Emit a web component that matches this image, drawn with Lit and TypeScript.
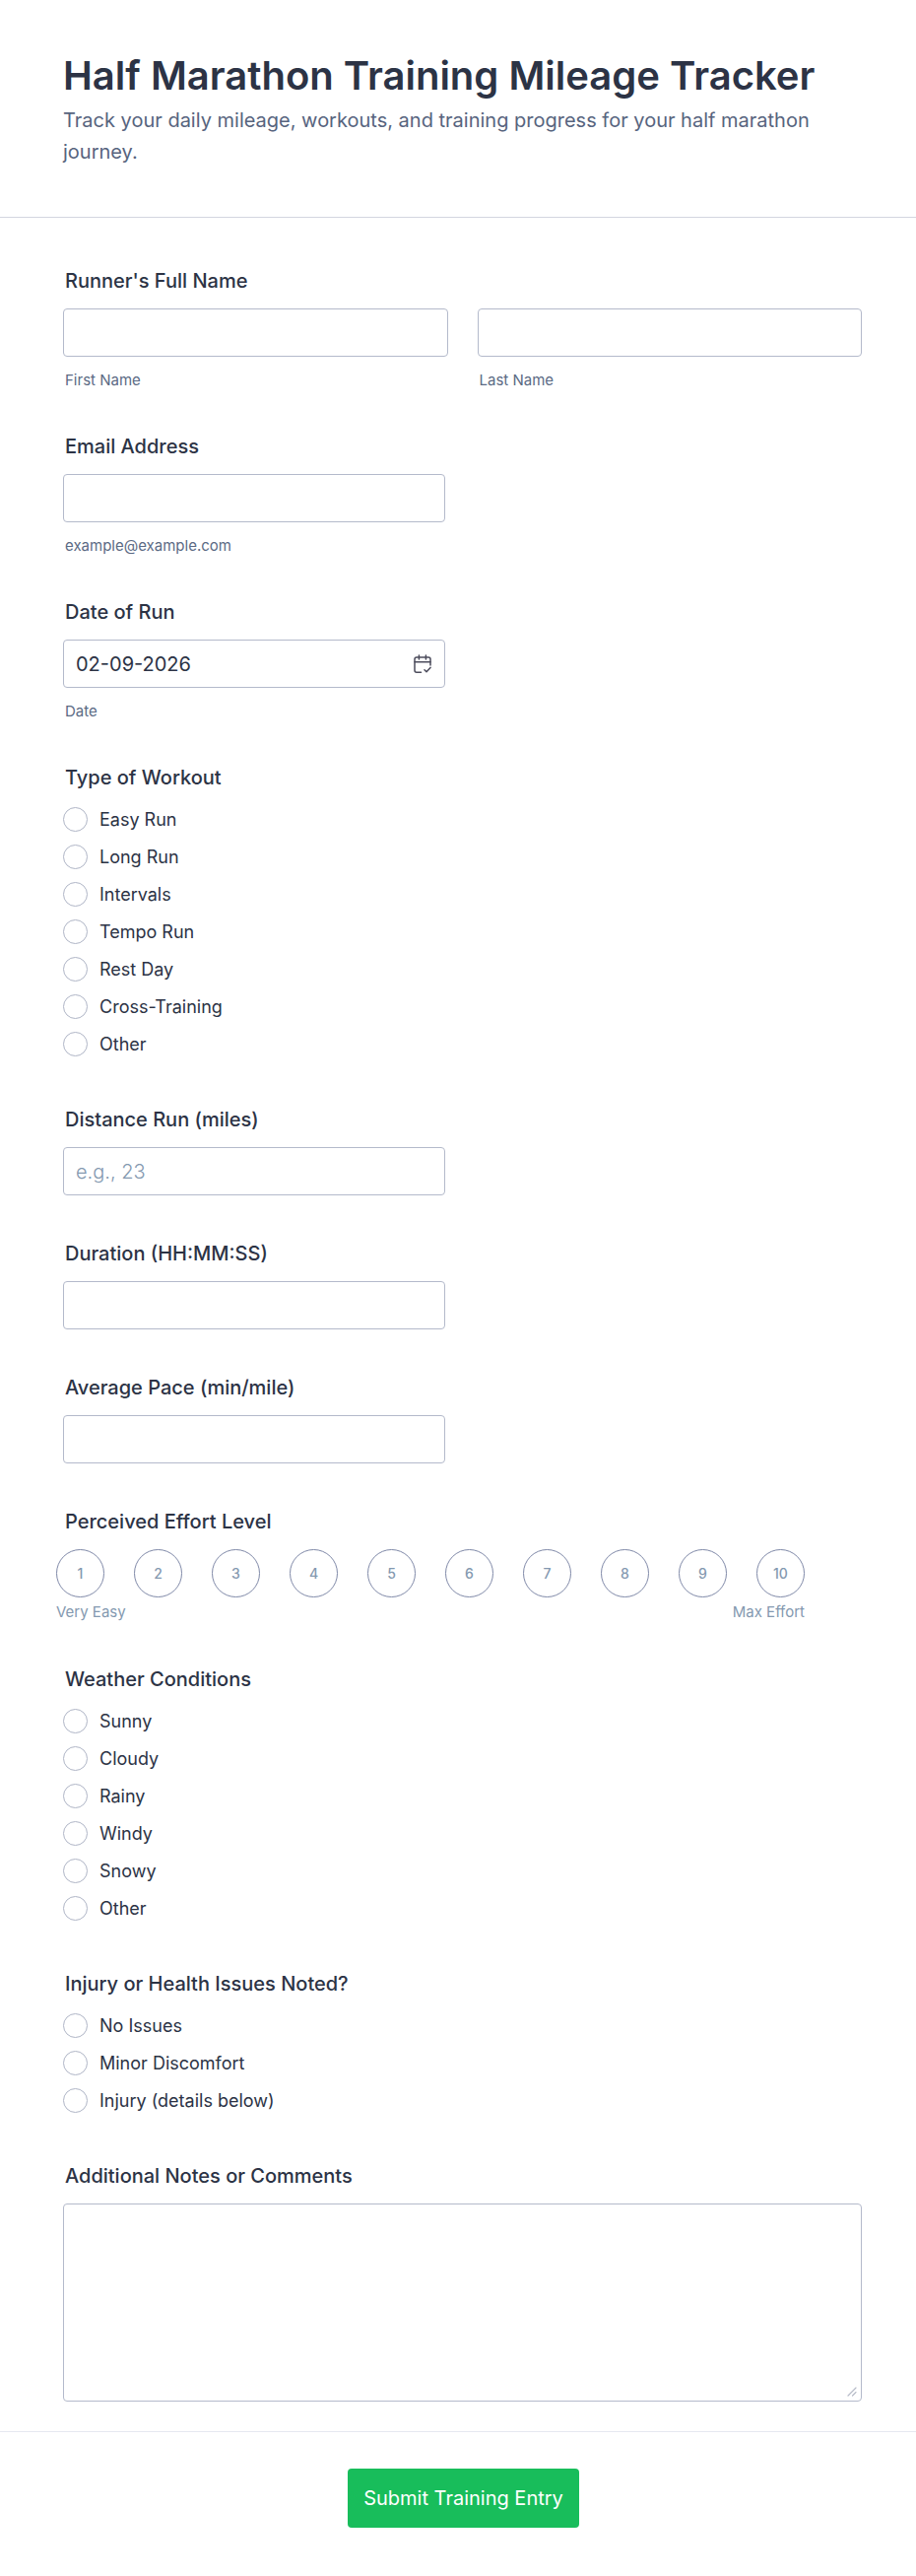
import { LitElement, html, css, nothing } from "lit";
import { customElement, property } from "lit/decorators.js";

const WORKOUTS = ["Easy Run", "Long Run", "Intervals", "Tempo Run", "Rest Day", "Cross-Training", "Other"];
const WEATHER = ["Sunny", "Cloudy", "Rainy", "Windy", "Snowy", "Other"];
const INJURIES = ["No Issues", "Minor Discomfort", "Injury (details below)"];
const EFFORT = [1, 2, 3, 4, 5, 6, 7, 8, 9, 10];

const shared = css`
  *,
  *::before,
  *::after {
    box-sizing: border-box;
  }
  .group {
    margin: 0;
    padding: 0;
    border: 0;
    min-width: 0;
  }
  .title {
    display: block;
    padding: 0 0 0 2px;
    margin-bottom: 14px;
    font-size: 20px;
    font-weight: 500;
    line-height: 28px;
    color: #2c3345;
  }
`;

@customElement("choice-list")
export class ChoiceList extends LitElement {
  @property() heading = "";
  @property() name = "";
  @property({ attribute: false }) options: string[] = [];

  static styles = [
    shared,
    css`
      :host {
        display: block;
      }
      .list {
        display: grid;
        gap: 13px;
        padding: 2px 0 5px;
      }
      .option {
        display: flex;
        align-items: center;
        gap: 12px;
        justify-self: start;
        font-size: 18px;
        line-height: 25px;
        color: #2c3345;
      }
      .radio {
        appearance: none;
        flex: none;
        width: 25px;
        height: 25px;
        margin: 0;
        border: 1px solid #afb5c6;
        border-radius: 50%;
        background: #fff;
      }
      .radio:checked {
        border: 7px solid #2e69ff;
      }
    `,
  ];

  render() {
    return html`
      <fieldset class="group">
        <legend class="title">${this.heading}</legend>
        <div class="list">
          ${this.options.map(
            (text) => html`
              <label class="option">
                <input class="radio" type="radio" name=${this.name} value=${text} />
                <span>${text}</span>
              </label>
            `
          )}
        </div>
      </fieldset>
    `;
  }
}

@customElement("effort-scale")
export class EffortScale extends LitElement {
  static styles = [
    shared,
    css`
      :host {
        display: block;
      }
      .scale {
        width: fit-content;
        max-width: 100%;
        margin-left: -7px;
      }
      .steps {
        display: flex;
        flex-wrap: wrap;
        gap: 30px;
      }
      .step {
        display: grid;
        place-items: center;
        font-size: 14px;
        font-weight: 500;
        color: #8499b0;
      }
      .dot,
      .num {
        grid-area: 1 / 1;
      }
      .dot {
        appearance: none;
        width: 49px;
        height: 49px;
        margin: 0;
        border: 1px solid #7f89a8;
        border-radius: 50%;
      }
      .dot:checked {
        background: #2c3345;
      }
      .num {
        pointer-events: none;
      }
      .ends {
        display: flex;
        justify-content: space-between;
        margin-top: 6px;
        font-size: 15px;
        line-height: 18px;
        color: #8499b0;
      }
    `,
  ];

  render() {
    return html`
      <fieldset class="group">
        <legend class="title">Perceived Effort Level</legend>
        <div class="scale">
          <div class="steps">
            ${EFFORT.map(
              (n) => html`
                <label class="step">
                  <input class="dot" type="radio" name="effort" value=${n} />
                  <span class="num">${n}</span>
                </label>
              `
            )}
          </div>
          <div class="ends"><span>Very Easy</span><span>Max Effort</span></div>
        </div>
      </fieldset>
    `;
  }
}

@customElement("app-root")
export class AppRoot extends LitElement {
  static styles = [
    shared,
    css`
      :host {
        display: block;
        font-family: Inter, "Liberation Sans", sans-serif;
        color: #2c3345;
        background: #fff;
      }
      .header {
        padding: 53px 64px 50px;
        border-bottom: 1px solid #d3d6e0;
      }
      .heading {
        margin: 0 0 5px;
        font-size: 40px;
        font-weight: 600;
        line-height: 48px;
      }
      .intro {
        margin: 0;
        font-size: 20px;
        font-weight: 400;
        line-height: 32px;
        color: #57647e;
      }
      .fields {
        display: flex;
        flex-direction: column;
        gap: 45px;
        padding: 50px 55px 30px 64px;
      }
      .names {
        display: grid;
        grid-template-columns: 1fr 1fr;
        gap: 30px;
      }
      .narrow {
        max-width: 388px;
      }
      .control {
        display: block;
        width: 100%;
        height: 49px;
        margin: 0;
        padding: 0 12px;
        border: 1px solid #b4bacb;
        border-radius: 4px;
        background: #fff;
        font-family: inherit;
        font-size: 20px;
        color: #2c3345;
      }
      .control::placeholder {
        color: #8499b0;
        font-weight: 300;
        opacity: 1;
      }
      .hint {
        display: block;
        margin: 14px 0 -2px;
        padding-left: 2px;
        font-size: 15px;
        line-height: 20px;
        color: #5b6a84;
      }
      .box {
        position: relative;
      }
      .picker {
        position: absolute;
        top: 0;
        right: 0;
        display: grid;
        place-items: center;
        width: 46px;
        height: 49px;
        padding: 0;
        border: 0;
        background: none;
      }
      .area {
        height: 201px;
        padding: 12px;
        resize: none;
      }
      .grip {
        position: absolute;
        right: 5px;
        bottom: 5px;
        pointer-events: none;
      }
      .footer {
        display: flex;
        justify-content: center;
        padding: 37px 53px 49px 64px;
        border-top: 1px solid #e6e8f0;
      }
      .submit {
        height: 60px;
        padding: 0 16px;
        border: 0;
        border-radius: 4px;
        background: #18bd5b;
        color: #fff;
        font-family: inherit;
        font-size: 20px;
        font-weight: 400;
      }
    `,
  ];

  private field(id: string, title: string, opts: { type?: string; hint?: string; placeholder?: string } = {}) {
    return html`
      <div class="narrow">
        <label class="title" for=${id}>${title}</label>
        <input
          class="control"
          id=${id}
          type=${opts.type ?? "text"}
          placeholder=${opts.placeholder ?? nothing}
          aria-describedby=${opts.hint ? `${id}-hint` : nothing}
        />
        ${opts.hint ? html`<span class="hint" id="${id}-hint">${opts.hint}</span>` : nothing}
      </div>
    `;
  }

  render() {
    return html`
      <form>
        <header class="header">
          <h1 class="heading">Half Marathon Training Mileage Tracker</h1>
          <p class="intro">
            Track your daily mileage, workouts, and training progress for your half marathon journey.
          </p>
        </header>

        <div class="fields">
          <fieldset class="group">
            <legend class="title">Runner's Full Name</legend>
            <div class="names">
              <div>
                <input class="control" id="first" type="text" />
                <label class="hint" for="first">First Name</label>
              </div>
              <div>
                <input class="control" id="last" type="text" />
                <label class="hint" for="last">Last Name</label>
              </div>
            </div>
          </fieldset>

          ${this.field("email", "Email Address", { type: "email", hint: "example@example.com" })}

          <div class="narrow">
            <label class="title" for="date">Date of Run</label>
            <div class="box">
              <input class="control" id="date" type="text" value="02-09-2026" aria-describedby="date-hint" />
              <button class="picker" type="button" aria-label="Choose date">
                <svg width="18" height="20" viewBox="0 0 18 20" fill="none" stroke="#4c4c5c" stroke-width="1.5" stroke-linecap="round" stroke-linejoin="round">
                  <path d="M7.5 18.2H3A2 2 0 0 1 1 16.2V5A2 2 0 0 1 3 3H15A2 2 0 0 1 17 5V11" />
                  <path d="M1 7.8H17M5.4 1V5M12.4 1V5" />
                  <path d="M11 15.8L13 17.8L17 13.4" />
                </svg>
              </button>
            </div>
            <span class="hint" id="date-hint">Date</span>
          </div>

          <choice-list heading="Type of Workout" name="workout" .options=${WORKOUTS}></choice-list>

          ${this.field("distance", "Distance Run (miles)", { placeholder: "e.g., 23" })}
          ${this.field("duration", "Duration (HH:MM:SS)")}
          ${this.field("pace", "Average Pace (min/mile)")}

          <effort-scale></effort-scale>

          <choice-list heading="Weather Conditions" name="weather" .options=${WEATHER}></choice-list>
          <choice-list heading="Injury or Health Issues Noted?" name="injury" .options=${INJURIES}></choice-list>

          <div>
            <label class="title" for="notes">Additional Notes or Comments</label>
            <div class="box">
              <textarea class="control area" id="notes"></textarea>
              <svg class="grip" width="10" height="10" viewBox="0 0 10 10" stroke="#b8bdc9" stroke-width="1.2" stroke-linecap="round">
                <path d="M1 9L9 1M5.5 9L9 5.5" />
              </svg>
            </div>
          </div>
        </div>

        <footer class="footer">
          <button class="submit" type="button">Submit Training Entry</button>
        </footer>
      </form>
    `;
  }
}
